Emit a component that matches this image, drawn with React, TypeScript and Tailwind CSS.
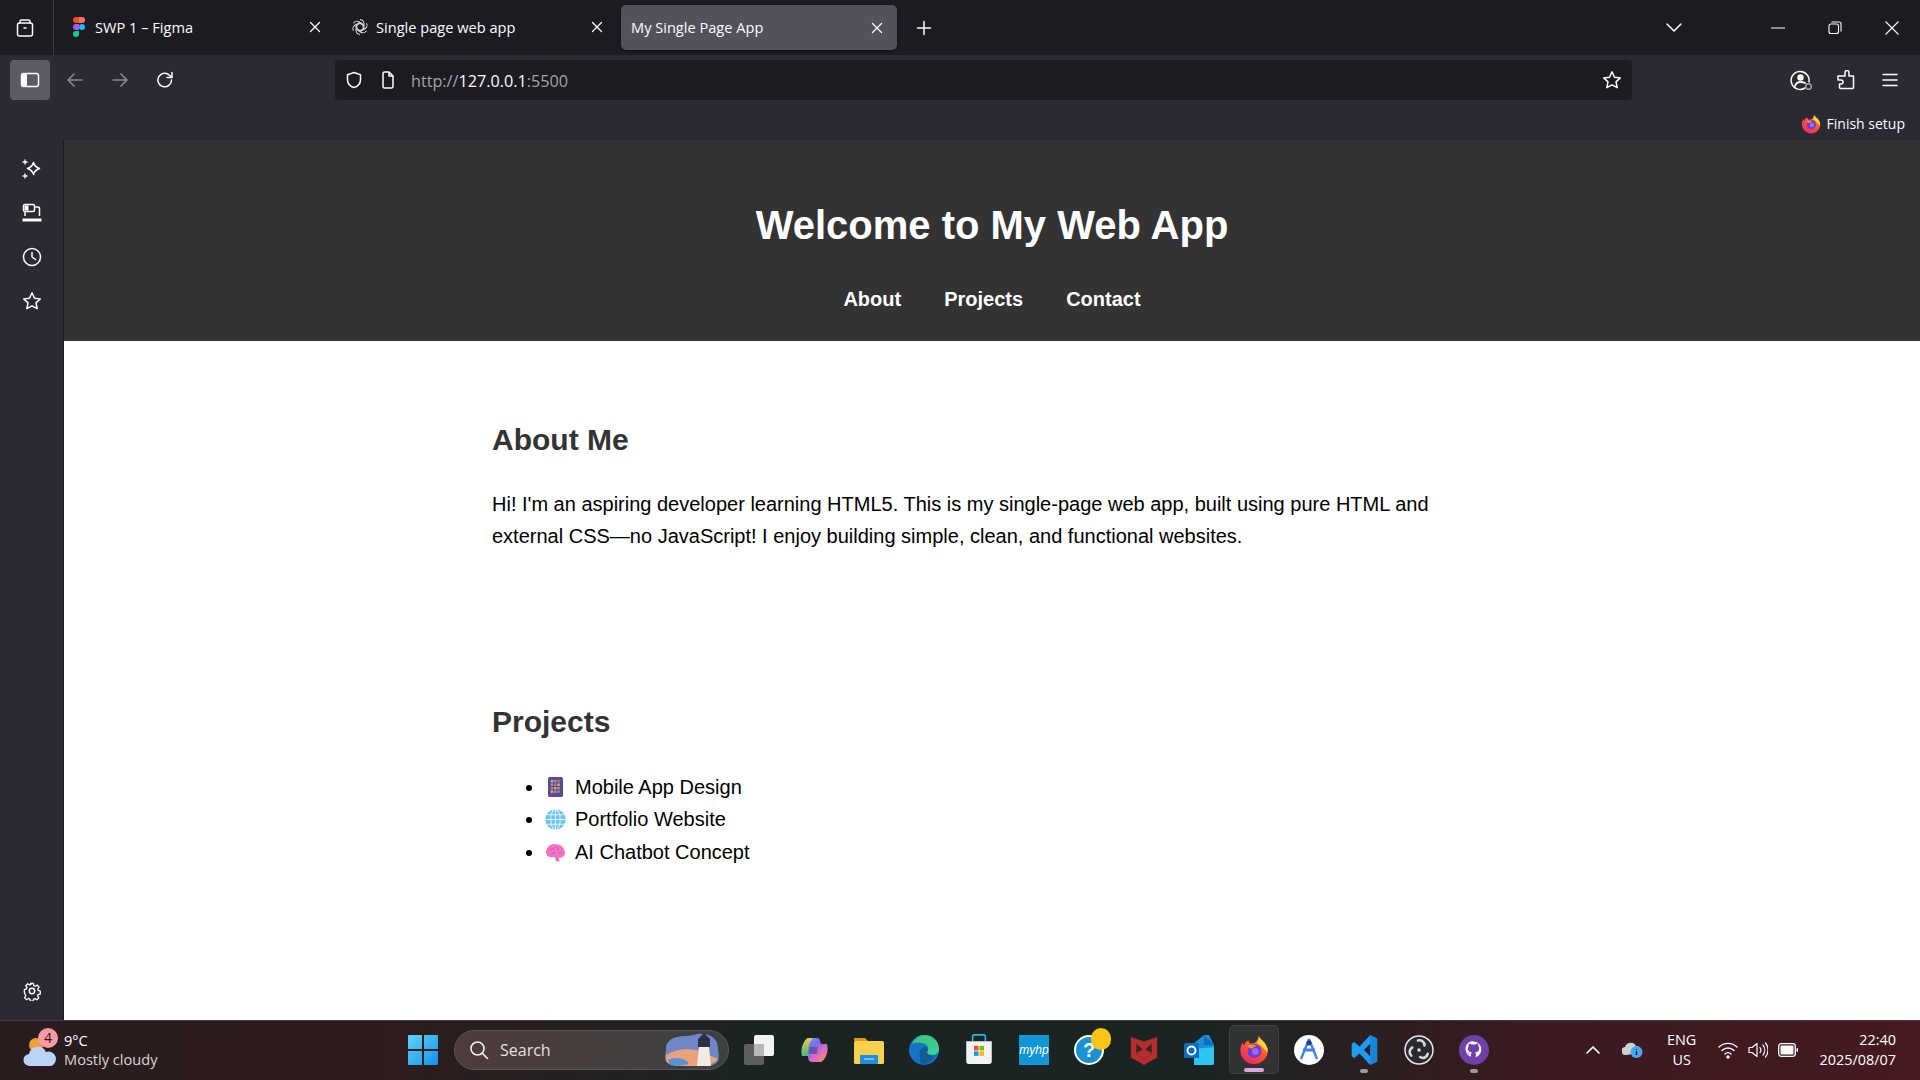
import React from "react";

const W = "#fbfbfe";

function Ico({ size = 20, vb = 20, children, className = "" }: { size?: number; vb?: number; children: React.ReactNode; className?: string }) {
  return (
    <svg width={size} height={size} viewBox={`0 0 ${vb} ${vb}`} fill="none" stroke={W} strokeWidth={1.5} strokeLinecap="round" strokeLinejoin="round" className={`shrink-0 ${className}`}>
      {children}
    </svg>
  );
}

const Close = () => (
  <Ico size={12} vb={12}><path d="M1.5 1.5l9 9M10.5 1.5l-9 9" strokeWidth={1.3} /></Ico>
);

const StarI = ({ size = 20 }: { size?: number }) => (
  <Ico size={size}><path d="M10 1.8l2.5 5.4 5.8.7-4.3 4 1.2 5.8L10 14.8l-5.2 2.9L6 11.9l-4.3-4 5.8-.7z" /></Ico>
);

const Figma = () => (
  <svg width="12" height="20" viewBox="0 0 12 20" className="shrink-0">
    <path d="M3 0h3v6H3a3 3 0 010-6z" fill="#f24e1e" />
    <path d="M6 0h3a3 3 0 010 6H6z" fill="#ff7262" />
    <path d="M3 7h3v6H3a3 3 0 010-6z" fill="#a259ff" />
    <circle cx="9" cy="10" r="3" fill="#1abcfe" />
    <path d="M3 14h3v3a3 3 0 11-3-3z" fill="#0acf83" />
  </svg>
);

const OpenAI = () => (
  <svg width="18" height="18" viewBox="0 0 18 18" fill="none" stroke="#e8e8e8" strokeWidth="1" className="shrink-0">
    <g>
      <path d="M9 1.500a4 4 0 014 4v4.800L9 12.600" />
      <path d="M9 1.500a4 4 0 014 4v4.800L9 12.600" transform="rotate(60 9 9)" />
      <path d="M9 1.500a4 4 0 014 4v4.800L9 12.600" transform="rotate(120 9 9)" />
      <path d="M9 1.500a4 4 0 014 4v4.800L9 12.600" transform="rotate(180 9 9)" />
      <path d="M9 1.500a4 4 0 014 4v4.800L9 12.600" transform="rotate(240 9 9)" />
      <path d="M9 1.500a4 4 0 014 4v4.800L9 12.600" transform="rotate(300 9 9)" />
    </g>
  </svg>
);

const FirefoxLogo = ({ size = 20 }: { size?: number }) => (
  <svg width={size} height={size} viewBox="0 0 32 32" className="shrink-0">
    <defs>
      <linearGradient id={`ff${size}`} x1="0.8" y1="0" x2="0.2" y2="1">
        <stop offset="0" stopColor="#ffb12b" />
        <stop offset="0.45" stopColor="#ff5a2c" />
        <stop offset="1" stopColor="#f0236b" />
      </linearGradient>
    </defs>
    <path d="M21 1c1 3 3.500 4 6 7 3 4 4 7 3.500 10.500C29.500 26 23.500 31 16 31 7.500 31 1.500 24.500 1.500 16.500c0-3 .8-6 2.500-8.500 0 1.500.5 2.500 1.500 3C6 8 8 6 10.500 6 10 7.500 11 8.500 12.500 9 16 10 20 7 21 1z" fill={`url(#ff${size})`} />
    <path d="M21 1c1 3 3.500 4 6 7 3 4 4 7 3.500 10.500L24 12c-1-2-3-3-5-3 2-2 3-5 2-8z" fill="#ffd43b" />
    <circle cx="16.500" cy="17" r="7.500" fill="#6b3fd4" />
    <path d="M9 12c3-2 7-2 9.500 0 -2 0-3.500 1-4 2.500-2 0-4-.5-5.500-2.500z" fill="#ff8a2c" />
    <circle cx="17.500" cy="17.500" r="3.500" fill="#a56bf0" />
  </svg>
);

const TabLabel = ({ children, className = "" }: { children: React.ReactNode; className?: string }) => (
  <span className={`text-[14.600px] text-[#fbfbfe] whitespace-nowrap mt-[1px] ${className}`}>{children}</span>
);

const TopBar = () => (
  <div className="h-[55px] bg-[#1c1b22] flex items-center shrink-0">
    <div className="w-[54px] h-full flex items-center justify-center pr-[4px] border-r border-[#3a3a42]">
      <Ico size={20}>
        <path d="M5 5V3.500A1.500 1.500 0 016.500 2h7A1.500 1.500 0 0115 3.500V5" />
        <rect x="2.500" y="5" width="15" height="13" rx="2" />
        <path d="M9 10h2" />
      </Ico>
    </div>
    <div className="flex items-center ml-[10px] h-[45px]">
      <div className="w-[267px] flex items-center pl-[9px] pr-[10px]">
        <Figma />
        <TabLabel className="ml-[10px]">SWP 1 – Figma</TabLabel>
        <span className="ml-auto flex"><Close /></span>
      </div>
      <div className="w-[290px] flex items-center pl-[20px] pr-[18px]">
        <OpenAI />
        <TabLabel className="ml-[7px]">Single page web app</TabLabel>
        <span className="ml-auto flex"><Close /></span>
      </div>
      <div className="w-[276px] h-[45px] rounded-[5px] flex items-center bg-[#53525c] pl-[10px] pr-[14px] shadow-[0_1px_2px_rgba(0,0,0,0.5)]">
        <TabLabel>My Single Page App</TabLabel>
        <span className="ml-auto flex"><Close /></span>
      </div>
    </div>
    <div className="ml-[19px] flex">
      <Ico size={16} vb={16}><path d="M8 1.500v13M1.500 8h13" /></Ico>
    </div>
    <div className="ml-auto flex items-center">
      <Ico size={18} vb={18} className="mr-[88px]"><path d="M2 5l7 7 7-7" /></Ico>
      <svg width="14" height="2" viewBox="0 0 14 2" className="mr-[43px]"><path d="M0 1h14" stroke={W} strokeWidth="1" /></svg>
      <svg width="14" height="14" viewBox="0 0 14 14" fill="none" stroke={W} strokeWidth="1.100" className="mr-[43px]">
        <rect x="1" y="3" width="9.500" height="9.500" rx="2" />
        <path d="M3.500 1h7.500A2 2 0 0113 3v7.500" />
      </svg>
      <svg width="14" height="14" viewBox="0 0 14 14" fill="none" stroke={W} strokeWidth="1.100" className="mr-[21px]"><path d="M.5.5l13 13M13.500.5l-13 13" /></svg>
    </div>
  </div>
);

const Toolbar = () => (
  <div className="h-[85px] bg-[#2b2a33] shrink-0 relative">
    <div className="h-[50px] flex items-center">
      <div className="ml-[10px] w-[40px] h-[40px] rounded-[4px] bg-[#5b5b66] flex items-center justify-center">
        <svg width="20" height="20" viewBox="0 0 20 20" fill="none">
          <rect x="1.500" y="3.500" width="17" height="13" rx="2" stroke={W} strokeWidth="1.500" />
          <rect x="2" y="4" width="5" height="12" rx="1" fill={W} />
        </svg>
      </div>
      <div className="w-[50px] flex justify-center ml-0">
        <Ico size={20}><path d="M17 10H3M9 4l-6 6 6 6" stroke="#8b8a91" /></Ico>
      </div>
      <div className="w-[40px] flex justify-center">
        <Ico size={20}><path d="M3 10h14M11 4l6 6-6 6" stroke="#8b8a91" /></Ico>
      </div>
      <div className="w-[50px] flex justify-center">
        <Ico size={20}><path d="M16.500 10a6.800 6.800 0 11-2-4.800L17 7.500M17 2.500v5h-5" /></Ico>
      </div>
      <div className="ml-[145px] w-[1297px] h-[40px] rounded-[4px] bg-[#1c1b22] flex items-center">
        <div className="ml-[10px] flex"><Ico size={18} vb={18}><path d="M9 1.500l6.500 2.200v5c0 4-2.800 6.600-6.500 7.800-3.700-1.200-6.500-3.800-6.500-7.800v-5z" /></Ico></div>
        <div className="ml-[16px] flex"><Ico size={18} vb={18}><path d="M4 2.500A1.500 1.500 0 015.500 1H10l4 4v10.500a1.500 1.500 0 01-1.500 1.500h-7A1.500 1.500 0 014 15.500zM10 1v4h4" /></Ico></div>
        <span className="ml-[14px] mt-[2px] text-[16.200px] text-[#a3a2a8] whitespace-nowrap">http://<span className="text-[#fbfbfe]">127.0.0.1</span>:5500</span>
        <div className="ml-auto mr-[10px] flex"><StarI /></div>
      </div>
      <div className="ml-auto flex items-center pr-[22px]">
        <svg width="24" height="24" viewBox="0 0 24 24" fill="none" stroke={W} strokeWidth="1.500" strokeLinecap="round">
          <path d="M20 14A9 9 0 1016 20" />
          <circle cx="11.500" cy="9.500" r="2.500" fill={W} />
          <path d="M6 18c1-3 3-4 5.500-4s3.500.5 4.500 1" strokeWidth="1.800" />
          <circle cx="19.500" cy="18.500" r="2.800" stroke="#a3a2a8" />
        </svg>
        <div className="ml-[23px]">
          <Ico size={20}><path d="M9 2.500a2 2 0 014 0V6h4.500v11.500a1 1 0 01-1 1H4.500a1 1 0 01-1-1V14H5a2 2 0 000-4H2V6h7z" /></Ico>
        </div>
        <div className="ml-[26px]">
          <Ico size={16} vb={16}><path d="M1 2.500h14M1 8h14M1 13.500h14" /></Ico>
        </div>
      </div>
    </div>
    <div className="absolute right-[15px] top-[58px] flex items-center">
      <FirefoxLogo size={20} />
      <span className="ml-[6px] text-[14px] text-[#fbfbfe] whitespace-nowrap">Finish setup</span>
    </div>
  </div>
);

const Sidebar = () => (
  <div className="w-[64px] shrink-0 bg-[#2b2a33] flex flex-col items-center pt-[19px] pb-[19px] border-r border-[#1c1b22]">
    <div className="flex flex-col items-center gap-[24px]">
      <Ico size={20}>
        <path d="M11.500 3.500c.8 3.300 2.200 4.700 6 6-3.800 1.300-5.200 2.700-6 6-.8-3.300-2.200-4.700-6-6 3.800-1.300 5.200-2.700 6-6z" />
        <path d="M3 1v4M1 3h4M3 15v4M1 17h4" strokeWidth="1.300" />
      </Ico>
      <svg width="20" height="20" viewBox="0 0 20 20" fill="none" stroke={W} strokeWidth="1.500">
        <rect x="1.500" y="1.500" width="11" height="7" rx="1.500" />
        <rect x="2.500" y="2.500" width="4" height="5" fill={W} stroke="none" />
        <path d="M13 4h3a1.500 1.500 0 011.500 1.500V13M3 9v4" />
        <path d="M.5 15.500h19v3H.5z" fill={W} stroke="none" />
        <path d="M8 14h4" stroke="#2b2a33" strokeWidth="1.500" />
      </svg>
      <Ico size={20}>
        <circle cx="10" cy="10" r="8.500" />
        <path d="M10 5.500V10l3.500 2.500" />
      </Ico>
      <StarI />
    </div>
    <div className="mt-auto flex">
      <Ico size={20}>
        <circle cx="10" cy="10" r="2.700" />
        <path d="M8.500 1.500h3l.5 2.500 1.500.7 2.300-1.200 2 2.200-1.400 2.100.5 1.500 2.300.9v3l-2.300.7-.6 1.500 1.300 2.200-2.100 2.100-2.200-1.300-1.500.6-.6 2.300h-3l-.6-2.400-1.500-.6-2.200 1.300-2.100-2.100 1.300-2.200-.6-1.500L1.500 11.500v-3l2.300-.8.6-1.500-1.300-2.100 2.100-2.100 2.200 1.200 1.500-.6z" transform="translate(1 1) scale(.9)" />
      </Ico>
    </div>
  </div>
);

const Tablet = () => (
  <svg width="21" height="22" viewBox="0 0 21 22" className="shrink-0">
    <rect x="3" y="1" width="15" height="20" rx="1.500" fill="#5d4b96" />
    {[0, 1, 2, 3].map((r) =>
      [0, 1, 2].map((c) => (
        <rect key={`${r}${c}`} x={5.800 + c * 3.300} y={4 + r * 3.500} width="2.400" height="2.400" fill={["#f2b53a", "#4fb3f0", "#ef6a5a"][(r + c) % 3]} />
      ))
    )}
  </svg>
);

const Globe = () => (
  <svg width="21" height="21" viewBox="0 0 20 20" fill="none" className="shrink-0">
    <circle cx="10" cy="10" r="9.700" fill="#6cc4f5" />
    <g stroke="#e4f5ff" strokeWidth="1">
      <ellipse cx="10" cy="10" rx="4.500" ry="9.700" />
      <path d="M10 .5v19M.5 10h19M2 5.500h16M2 14.500h16" />
    </g>
  </svg>
);

const Brain = () => (
  <svg width="21" height="21" viewBox="0 0 20 20" className="shrink-0">
    <path d="M1 10c0-4 3-8 8-8s10 3 10 8.500c0 3-2 4.500-4.500 4.500-.5 0-1 0-1.500-.2l1 3.700-3.500-.5-1-3.500C4 15 1 13.500 1 10z" fill="#f273c4" />
    <path d="M5 8c1-2 3-2 4-1M10 5c2 0 3 1 3 3M6 11c2 0 3-1 4-1M13 11c1 0 2 0 3-1" stroke="#c74fb4" strokeWidth="0.900" fill="none" />
  </svg>
);

const Item = ({ icon, text, className = "" }: { icon: React.ReactNode; text: string; className?: string }) => (
  <li className={className}>
    <span className="inline-flex items-center gap-[9px] align-top h-[32px]">{icon}<span>{text}</span></span>
  </li>
);

const Page = () => (
  <div className="flex-1 bg-white flex flex-col min-w-0" style={{ fontFamily: "'Liberation Sans', Arial, sans-serif" }}>
    <header className="h-[201px] bg-[#333333] text-white flex flex-col items-center pt-[62px]">
      <h1 className="text-[40px] leading-[46px] font-bold">Welcome to My Web App</h1>
      <nav className="flex gap-[43px] mt-[40px] text-[20px] leading-[23px] font-bold">
        <a>About</a>
        <a>Projects</a>
        <a>Contact</a>
      </nav>
    </header>
    <main className="w-[1000px] self-center pt-[82px] text-[20px] leading-[32px] text-black">
      <section className="h-[282px]">
        <h2 className="text-[30px] leading-[33px] font-bold text-[#333333]">About Me</h2>
        <p className="mt-[32px]">
          Hi! I'm an aspiring developer learning HTML5. This is my single-page web app, built using pure HTML and external CSS—no JavaScript! I enjoy building simple, clean, and functional websites.
        </p>
      </section>
      <section>
        <h2 className="text-[30px] leading-[33px] font-bold text-[#333333]">Projects</h2>
        <ul className="mt-[33px] pl-[53px] list-disc">
          <Item icon={<Tablet />} text="Mobile App Design" />
          <Item icon={<Globe />} text="Portfolio Website" />
          <Item icon={<Brain />} text="AI Chatbot Concept" className="mt-[1px]" />
        </ul>
      </section>
    </main>
  </div>
);

const AppIcon = ({ children, active, dot }: { children: React.ReactNode; active?: boolean; dot?: boolean }) => (
  <div className={`w-[50px] h-[49px] mx-[2.500px] rounded-[5px] flex items-center justify-center relative ${active ? "bg-[#ffffff14] border border-[#ffffff12]" : ""}`}>
    {children}
    {active && <div className="absolute bottom-[1px] left-[14px] w-[20px] h-[4px] rounded-full bg-[#d9a5e6]" />}
    {dot && <div className="absolute bottom-[1px] left-[21px] w-[8px] h-[4px] rounded-full bg-[#9b9b9b]" />}
  </div>
);

const Taskbar = () => (
  <div className="h-[60px] shrink-0 pb-[2px] border-t border-[#3f3d3d] bg-[linear-gradient(90deg,#2a1c1e_0%,#2d1c1e_20%,#1a2422_40%,#1a2422_62%,#3a1a1f_80%,#451a20_100%)] flex items-center text-white">
    <div className="w-[408px] flex items-center shrink-0 relative h-full">
      <svg width="36" height="38" viewBox="0 0 36 38" className="ml-[22px] mt-[2px] shrink-0">
        <circle cx="14" cy="13" r="7" fill="#f0a030" />
        <path d="M8 34a6 6 0 01-1-12 9 9 0 0117-2 7 7 0 015 14z" fill="#b9d4f4" />
      </svg>
      <div className="absolute left-[38px] top-[7px] w-[20px] h-[20px] rounded-full bg-[#ff99a4] text-[#1c1b22] text-[14px] leading-[20px] text-center">4</div>
      <div className="ml-[6px] text-[14.600px] leading-[20px]">
        <div>9°C</div>
        <div className="text-[#d8d4d4] -mt-[1px]">Mostly cloudy</div>
      </div>
    </div>
    <svg width="30" height="30" viewBox="0 0 30 30" className="shrink-0">
      <defs>
        <linearGradient id="win" x1="0" y1="0" x2="1" y2="1"><stop offset="0" stopColor="#5fd4f8" /><stop offset="1" stopColor="#1490ea" /></linearGradient>
      </defs>
      <path d="M0 1a1 1 0 011-1h13v14H0zM16 0h13a1 1 0 011 1v13H16zM0 16h14v14H1a1 1 0 01-1-1zM16 16h14v13a1 1 0 01-1 1H16z" fill="url(#win)" />
    </svg>
    <div className="ml-[16px] w-[275px] h-[40px] rounded-full bg-[linear-gradient(90deg,#4f3b3c,#3d4140)] border border-[#5a5555] flex items-center relative shrink-0">
      <svg width="20" height="20" viewBox="0 0 20 20" fill="none" stroke="#f0f0f0" strokeWidth="1.600" strokeLinecap="round" className="ml-[14px]"><circle cx="8.500" cy="8.500" r="6.500" /><path d="M13.500 13.500l5 5" /></svg>
      <span className="ml-[11px] text-[16px] text-[#e4e0e0]">Search</span>
      <svg width="60" height="34" viewBox="0 0 60 34" className="ml-auto mr-[6px]">
        <path d="M4 16C4 6 14 3 24 3c8 0 10-3 18-2 8 1 14 6 14 14 0 4 2 8 0 13-4 6-14 5-22 5C20 33 8 34 4 28c-2-4 0-8 0-12z" fill="#6f86c8" />
        <path d="M4 22c10-6 22-8 34-4l18 8c-4 6-14 7-22 7C20 33 8 34 4 28z" fill="#e9a37a" />
        <path d="M6 27c6-3 14-3 20 2 4 3-12 5-18 3z" fill="#5b8fd6" />
        <path d="M37 14h10l2 19H35z" fill="#f1ece2" />
        <rect x="36" y="6" width="12" height="8" fill="#2a2f45" />
        <path d="M42 0l6 6H36z" fill="#2a2f45" />
      </svg>
    </div>
    <svg width="30" height="30" viewBox="0 0 30 30" className="ml-[15px] shrink-0">
      <rect x="0" y="9" width="20" height="21" rx="2" fill="#5e5e5e" />
      <rect x="10" y="0" width="20" height="21" rx="2" fill="#f3f3f3" />
      <rect x="10" y="9" width="10" height="12" fill="#b8b8b8" />
    </svg>
    <div className="ml-[12.500px] flex items-center">
      <AppIcon>
        <svg width="30" height="30" viewBox="0 0 30 30">
          <defs>
            <linearGradient id="cop" x1="0" y1="0" x2="1" y2="1"><stop offset="0" stopColor="#33c3e8" /><stop offset="0.4" stopColor="#7d6cf0" /><stop offset="0.7" stopColor="#e46cc0" /><stop offset="1" stopColor="#f8a04a" /></linearGradient>
            <linearGradient id="cop2" x1="0" y1="1" x2="0" y2="0"><stop offset="0" stopColor="#3fc46a" /><stop offset="1" stopColor="#f7c64a" /></linearGradient>
          </defs>
          <path d="M9 3h9c3 0 3 3 4 6l6 0c2 7-1 15-6 18h-9c-3 0-4-3-4-6l-6 0C1 14 4 6 9 3z" fill="url(#cop)" />
          <path d="M9 3C5 5 2 13 3 21h6c-1-6 1-14 5-18z" fill="url(#cop2)" />
          <path d="M11 12h8l-1 7h-8z" fill="#1a2422" opacity="0.350" />
        </svg>
      </AppIcon>
      <AppIcon>
        <svg width="30" height="30" viewBox="0 0 30 30">
          <path d="M0 4a1 1 0 011-1h10l3 3H0z" fill="#d99f10" />
          <rect x="0" y="6" width="30" height="23" rx="1.500" fill="#fcd04f" />
          <rect x="6" y="20" width="18" height="9" rx="1" fill="#1f8ce0" />
          <path d="M10 24h10" stroke="#bfe4ff" strokeWidth="1.200" />
        </svg>
      </AppIcon>
      <AppIcon>
        <svg width="30" height="30" viewBox="0 0 30 30">
          <defs>
            <linearGradient id="edg" x1="0" y1="0" x2="1" y2="1"><stop offset="0" stopColor="#3ec46d" /><stop offset="1" stopColor="#3ad0a4" /></linearGradient>
          </defs>
          <circle cx="15" cy="15" r="15" fill="#1473c4" />
          <path d="M3 9C6 3 11 0 15 0c9 0 15 6 15 14 0 4-3 6-7 6-3 0-5-1-5-3 2-2 2-6-2-8C11 7 6 8 3 9z" fill="url(#edg)" />
          <path d="M13 13c2-2 6-1 6 2 0 1-1 2-1 2 0 3 4 4 8 3-2 5-7 9-12 9-4 0-2-3-3-6-1-4-1-7 2-10z" fill="#1a2422" opacity="0.300" />
        </svg>
      </AppIcon>
      <AppIcon>
        <svg width="30" height="31" viewBox="0 0 30 34">
          <path d="M8 8V3a2 2 0 012-2h10a2 2 0 012 2v5" fill="none" stroke="#2cb2e8" strokeWidth="1.800" />
          <path d="M1 8h28v22a3 3 0 01-3 3H4a3 3 0 01-3-3z" fill="#f3f3f3" />
          <rect x="9.500" y="13" width="5" height="5" fill="#f25022" />
          <rect x="15.500" y="13" width="5" height="5" fill="#7fba00" />
          <rect x="9.500" y="19" width="5" height="5" fill="#00a4ef" />
          <rect x="15.500" y="19" width="5" height="5" fill="#ffb900" />
        </svg>
      </AppIcon>
      <AppIcon>
        <div className="w-[30px] h-[30px] bg-[#0f96d6] flex items-center justify-center text-[12px] italic text-white" style={{ fontFamily: "'Liberation Sans', sans-serif" }}>myhp</div>
      </AppIcon>
      <AppIcon>
        <div className="relative w-[30px] h-[30px] rounded-full bg-[#1a92cf] border-[2px] border-white flex items-center justify-center text-[20px] font-bold text-white" style={{ fontFamily: "'Liberation Sans', sans-serif" }}>
          ?
          <div className="absolute top-[-9px] right-[-9px] w-[20px] h-[22px] rounded-full bg-[#fcc419]" />
        </div>
      </AppIcon>
      <AppIcon>
        <svg width="28" height="30" viewBox="0 0 28 32">
          <path d="M0 2l14 5 14-5v22l-14 8-14-8z" fill="#b52d2d" />
          <path d="M6 9l8 8 8-8v12l-8 5-8-5z" fill="#1a2422" opacity="0.850" />
          <path d="M6 19l8-4 8 4v2l-8 5-8-5z" fill="#b52d2d" />
        </svg>
      </AppIcon>
      <AppIcon>
        <svg width="30" height="30" viewBox="0 0 30 30">
          <path d="M10 8l10-8h5l5 10v18a2 2 0 01-2 2H10z" fill="#1890d8" />
          <path d="M20 0l10 10h-10z" fill="#0f6cbd" />
          <path d="M10 14l20-2v16a2 2 0 01-2 2H10z" fill="#2ec4ee" />
          <rect x="0" y="8" width="15" height="15" rx="1.500" fill="#0f6cbd" />
          <circle cx="7.500" cy="15.500" r="4" fill="none" stroke="#fff" strokeWidth="1.800" />
        </svg>
      </AppIcon>
      <AppIcon active>
        <FirefoxLogo size={30} />
      </AppIcon>
      <AppIcon>
        <svg width="30" height="30" viewBox="0 0 30 30">
          <circle cx="15" cy="15" r="15" fill="#fff" />
          <path d="M15 4l8 20M15 4L7 24" stroke="#3f83e8" strokeWidth="2.400" fill="none" />
          <path d="M9 15h12" stroke="#3f83e8" strokeWidth="3" />
          <circle cx="15" cy="8" r="2.500" fill="#243a7a" />
        </svg>
      </AppIcon>
      <AppIcon dot>
        <svg width="30" height="30" viewBox="0 0 30 34">
          <path d="M22 0l8 4v26l-8 4-12-13-6 5-3-2v-14l3-2 6 5zM22 10l-7 7 7 7z" fill="#1f9cf0" fillRule="evenodd" />
          <path d="M22 0l8 4v26l-8 4z" fill="#0f78c8" opacity="0.600" />
        </svg>
      </AppIcon>
      <AppIcon>
        <svg width="30" height="30" viewBox="0 0 30 30" fill="none">
          <circle cx="15" cy="15" r="14" fill="#2a2a2e" stroke="#e8e8e8" strokeWidth="1.500" />
          <g stroke="#d8d8d8" strokeWidth="2.600" strokeLinecap="round">
            <path d="M14 5.500a5 5 0 016.500 5" />
            <path d="M14 5.500a5 5 0 016.500 5" transform="rotate(120 15 15)" />
            <path d="M14 5.500a5 5 0 016.500 5" transform="rotate(240 15 15)" />
          </g>
          <circle cx="15" cy="15" r="1.800" fill="#d8d8d8" />
        </svg>
      </AppIcon>
      <AppIcon dot>
        <svg width="30" height="30" viewBox="0 0 30 30">
          <circle cx="15" cy="15" r="15" fill="#6e40a8" />
          <path d="M15 6c-5 0-8.500 3.500-8.500 8 0 3.700 2.300 6.600 5.500 7.800v-2.600c-2 .4-3-.5-3.500-2 .8.300 1.500.9 2 1.600.6.500 1.300.4 1.700.1 0-.7.300-1.200.6-1.500-2.500-.4-4-1.600-4-4 0-1 .3-1.800.9-2.500-.1-.7-.1-1.500.2-2.300.9 0 1.800.4 2.600 1 .9-.2 2.900-.2 4 0 .8-.6 1.700-1 2.600-1 .3.800.3 1.600.2 2.300.6.700.9 1.500.9 2.500 0 2.400-1.500 3.600-4 4 .4.400.6 1 .6 1.800v3c3.200-1.200 5.500-4.100 5.500-7.800 0-4.500-3.500-8-8.800-8z" fill="#fff" />
        </svg>
      </AppIcon>
    </div>
    <div className="ml-auto flex items-center h-full">
      <Ico size={16} vb={16}><path d="M2 11l6-6 6 6" strokeWidth="1.700" /></Ico>
      <svg width="22" height="20" viewBox="0 0 22 20" className="ml-[21px]">
        <path d="M4 15a4 4 0 01-1-8 6 6 0 0111-1 4 4 0 013 7z" fill="#cfcfcf" />
        <circle cx="14.500" cy="12" r="6" fill="#46a9ee" />
        <path d="M14.500 9v.8M14.500 11v4" stroke="#12202e" strokeWidth="1.400" />
      </svg>
      <div className="ml-[17.500px] w-[40px] text-[14.400px] leading-[20px] text-center text-white">
        <div>ENG</div>
        <div>US</div>
      </div>
      <svg width="20" height="18" viewBox="0 0 20 18" fill="none" stroke={W} strokeWidth="1.400" strokeLinecap="round" className="ml-[16px]">
        <path d="M1 6a13 13 0 0118 0M4 9.500a8.500 8.500 0 0112 0M7 13a4 4 0 016 0" />
        <circle cx="10" cy="16" r="1" fill={W} />
      </svg>
      <svg width="20" height="18" viewBox="0 0 20 18" fill="none" stroke={W} strokeWidth="1.200" strokeLinecap="round" strokeLinejoin="round" className="ml-[10px]">
        <path d="M1 6.500h3L9 2.500v13l-5-4H1z" />
        <path d="M12 6.500a4 4 0 010 5M15 4a8 8 0 010 10M17.500 2a11 11 0 010 14" />
      </svg>
      <svg width="20" height="14" viewBox="0 0 20 14" fill="none" className="ml-[10px]">
        <rect x=".7" y=".7" width="16.600" height="12.600" rx="2.500" stroke={W} strokeWidth="1.300" />
        <rect x="2.500" y="2.500" width="13" height="9" rx="1" fill={W} />
        <rect x="18.500" y="5" width="1.500" height="4" rx=".7" fill={W} />
      </svg>
      <div className="ml-[22px] mr-[24px] text-[14.400px] leading-[20px] text-right text-white">
        <div>22:40</div>
        <div>2025/08/07</div>
      </div>
    </div>
  </div>
);

export default function App() {
  return (
    <div className="w-[1920px] h-[1080px] flex flex-col overflow-hidden" style={{ fontFamily: "'Open Sans', 'Noto Sans', sans-serif" }}>
      <TopBar />
      <Toolbar />
      <div className="flex-1 flex min-h-0">
        <Sidebar />
        <Page />
      </div>
      <Taskbar />
    </div>
  );
}
